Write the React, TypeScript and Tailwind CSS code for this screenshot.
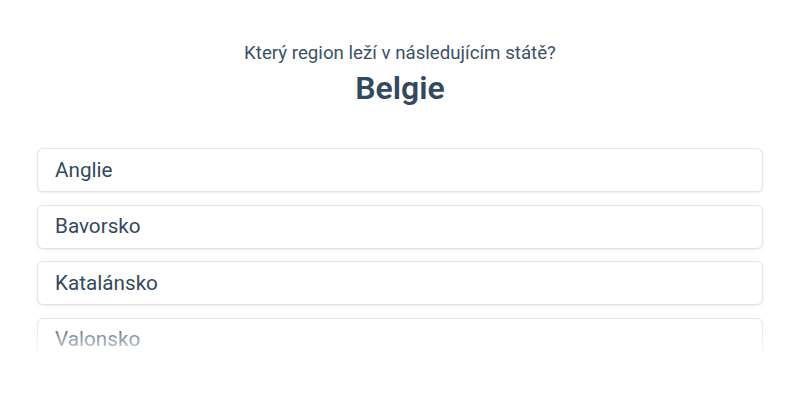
import React from "react";

const options = ["Anglie", "Bavorsko", "Katalánsko", "Valonsko"];

export default function App() {
  return (
    <div className="w-[800px] h-[400px] bg-white font-['Roboto',sans-serif] text-[#34495e]">
      <div className="pt-[39px] flex flex-col items-center">
        <p className="text-[18.7px] leading-[28px] text-[#3d5166]">Který region leží v následujícím státě?</p>
        <h1 className="mt-[3px] text-[32px] leading-[36px] font-semibold text-[#34495e]">Belgie</h1>
      </div>
      <div className="relative mt-[41px] mx-[36px] h-[214px] overflow-hidden">
        <div className="flex flex-col gap-[12.5px] pt-px px-px">
          {options.map((o) => (
            <div
              key={o}
              className="h-[44px] shrink-0 flex items-center px-[17px] pt-px rounded-md border border-[#e2e4e7] bg-white shadow-[0_1px_3px_rgba(0,0,0,0.08)] text-[20.7px]"
            >
              {o}
            </div>
          ))}
        </div>
        <div className="absolute left-0 right-0 bottom-0 h-[42px] bg-gradient-to-b from-white/0 to-white" />
      </div>
    </div>
  );
}
